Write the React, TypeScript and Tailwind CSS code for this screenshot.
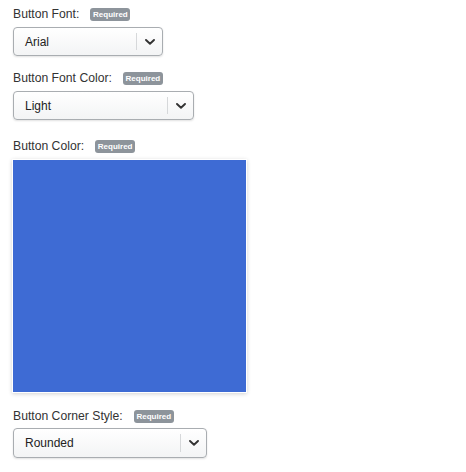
import React from "react";

const font = { fontFamily: '"Liberation Sans", Arial, sans-serif' };

function Badge() {
  return (
    <span className="inline-flex h-[13px] w-[40px] items-center justify-center rounded-[3px] bg-[#8d949b] text-[8px] font-semibold leading-none text-white">
      Required
    </span>
  );
}

function Label({ text }: { text: string }) {
  return (
    <div className="flex h-[13px] items-center gap-[11px]">
      <span className="text-[12.2px] leading-none text-[#333]">{text}</span>
      <Badge />
    </div>
  );
}

function Chevron() {
  return (
    <svg width="10" height="6" viewBox="0 0 10 6" fill="none">
      <path d="M1 1 L5 4.8 L9 1" stroke="#333" strokeWidth="1.9" strokeLinecap="round" strokeLinejoin="round" />
    </svg>
  );
}

function Select({ value, width, height }: { value: string; width: string; height: string }) {
  return (
    <div
      className={`flex ${width} ${height} items-stretch rounded-[4px] border border-[#a9adb1] bg-gradient-to-b from-white to-[#f3f4f5] shadow-[0_1px_2px_rgba(0,0,0,0.12)]`}
    >
      <div className="flex flex-1 items-center pl-[11px] text-[12px] text-[#222]">{value}</div>
      <div className="my-[5px] w-px bg-[#d6d8da]" />
      <div className="flex w-[25px] items-center justify-center">
        <Chevron />
      </div>
    </div>
  );
}

export default function App() {
  return (
    <div className="flex min-h-[472px] w-[466px] flex-col bg-white pl-[13px] pt-[8px]" style={font}>
      <Label text="Button Font:" />
      <div className="mt-[6px]">
        <Select value="Arial" width="w-[150px]" height="h-[29px]" />
      </div>
      <div className="mt-[16px]">
        <Label text="Button Font Color:" />
      </div>
      <div className="mt-[6px]">
        <Select value="Light" width="w-[181px]" height="h-[29px]" />
      </div>
      <div className="mt-[20px]">
        <Label text="Button Color:" />
      </div>
      <div className="mt-[6px] ml-[-1px] h-[234px] w-[235px] border border-white bg-[#3e6bd4] shadow-[0_1px_4px_rgba(0,0,0,0.18)]" />
      <div className="mt-[17px]">
        <Label text="Button Corner Style:" />
      </div>
      <div className="mt-[5px]">
        <Select value="Rounded" width="w-[194px]" height="h-[30px]" />
      </div>
    </div>
  );
}
